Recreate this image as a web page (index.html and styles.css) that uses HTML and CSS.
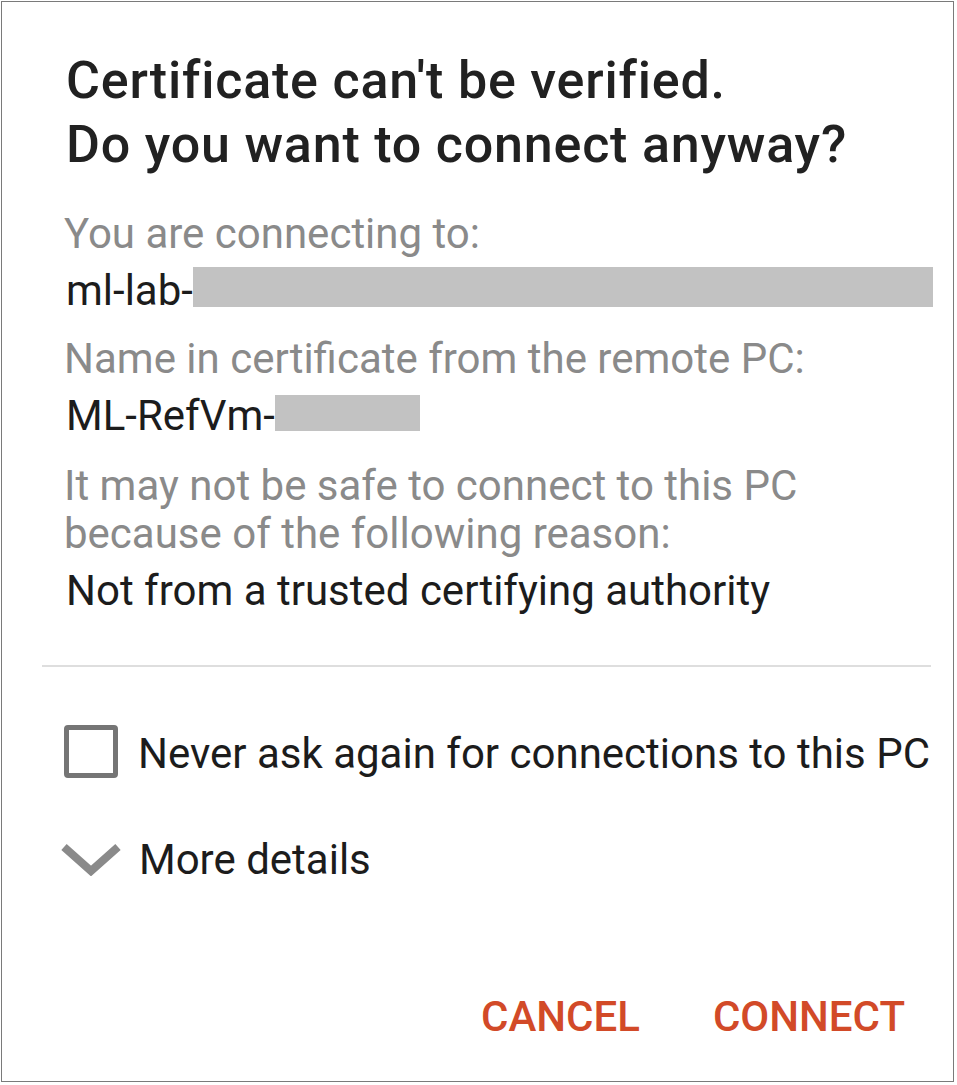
FILE: index.html
```html
<!DOCTYPE html>
<html lang="en">
<head>
<meta charset="utf-8">
<title>Certificate can't be verified</title>
<link rel="stylesheet" href="styles.css">
</head>
<body>
<div class="dialog">
  <div class="body">
    <h1 class="title">Certificate can't be verified.<br>Do you want to connect anyway?</h1>
    <div class="group first">
      <div class="label">You are connecting to:</div>
      <div class="value">ml-lab-<span class="redact redact-host"></span></div>
    </div>
    <div class="group">
      <div class="label">Name in certificate from the remote PC:</div>
      <div class="value">ML-RefVm-<span class="redact redact-name"></span></div>
    </div>
    <div class="group third">
      <div class="label">It may not be safe to connect to this PC<br>because of the following reason:</div>
      <div class="value">Not from a trusted certifying authority</div>
    </div>
  </div>
  <div class="divider"></div>
  <div class="option check-row">
    <span class="checkbox"></span>
    <span class="option-text">Never ask again for connections to this PC</span>
  </div>
  <div class="option details-row">
    <svg class="chevron" width="60" height="32" viewBox="0 0 60 32" aria-hidden="true">
      <polyline points="3,3 30,27 57,3" fill="none" stroke="#8a8a8a" stroke-width="8"/>
    </svg>
    <span class="option-text">More details</span>
  </div>
  <div class="actions">
    <span class="btn">CANCEL</span>
    <span class="btn">CONNECT</span>
  </div>
</div>
</body>
</html>
```
FILE: styles.css
```css
html, body {
  margin: 0;
  padding: 0;
  background: #ffffff;
}
body {
  font-family: Roboto, "Liberation Sans", sans-serif;
}
.dialog {
  margin: 1px;
  width: 951px;
  height: 1079px;
  border: 1px solid #7a7a7a;
  background: #ffffff;
  display: flex;
  flex-direction: column;
}
.body {
  padding: 47px 20px 0 64px;
}
.title {
  margin: 0;
  font-size: 52px;
  font-weight: 500;
  letter-spacing: 0.8px;
  line-height: 64px;
  color: #212121;
}
.group {
  margin-top: 20px;
}
.group.first {
  margin-top: 33px;
}
.group.third {
  margin-top: 22px;
}
.label {
  margin-left: -2px;
  font-size: 42px;
  line-height: 48px;
  color: #8a8a8a;
}
.value {
  margin-top: 9px;
  font-size: 42px;
  line-height: 48px;
  color: #1c1c1c;
  white-space: nowrap;
}
.redact {
  display: inline-block;
  background: #c2c2c2;
}
.redact-host {
  width: 740px;
  height: 40px;
  vertical-align: -2px;
}
.redact-name {
  width: 145px;
  height: 36px;
  vertical-align: -1px;
}
.divider {
  margin: 50px 22px 0 40px;
  height: 2px;
  background: #dedede;
}
.option {
  display: flex;
  align-items: flex-start;
  font-size: 42px;
  line-height: 48px;
  color: #1c1c1c;
}
.check-row {
  margin-top: 58px;
  padding-left: 62px;
}
.checkbox {
  box-sizing: border-box;
  width: 54px;
  height: 53px;
  border: 5px solid #757575;
  border-radius: 4px;
  flex: none;
}
.check-row .option-text {
  margin-top: 5px;
  margin-left: 20px;
}
.details-row {
  margin-top: 58px;
  padding-left: 59px;
}
.chevron {
  flex: none;
  margin-top: 8px;
}
.details-row .option-text {
  margin-left: 18px;
}
.actions {
  margin-top: 109px;
  display: flex;
  justify-content: flex-end;
  gap: 73px;
  padding-right: 48px;
}
.btn {
  font-size: 42px;
  line-height: 48px;
  font-weight: 500;
  color: #d24a28;
}
```
